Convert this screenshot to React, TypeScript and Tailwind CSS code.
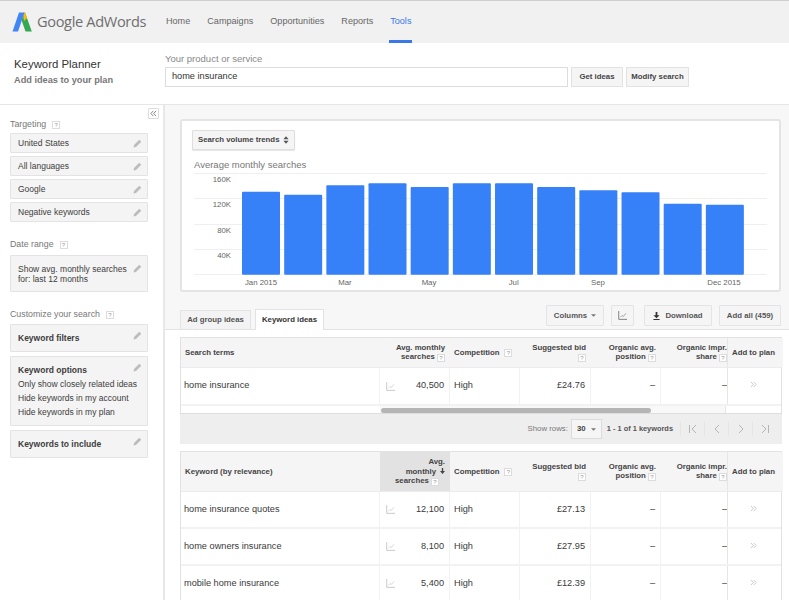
import type { ReactNode } from "react";

const columns = "grid grid-cols-[199px_70px_70px_71px_70px_66px_56px]";

const targeting = ["United States", "All languages", "Google", "Negative keywords"];
const navItems = ["Home", "Campaigns", "Opportunities", "Reports"];

const bars = [191.7, 194.7, 185.3, 183.3, 187, 183.3, 183.3, 187, 190.3, 192.3, 203.7, 204.7];
const gridLines = [173.5, 198.5, 224.5, 249.5, 274.5];
const yLabels = [
  { label: "160K", y: 182 },
  { label: "120K", y: 207 },
  { label: "80K", y: 232.5 },
  { label: "40K", y: 258 },
];
const xLabels = [
  { label: "Jan 2015", x: 261 },
  { label: "Mar", x: 345 },
  { label: "May", x: 429 },
  { label: "Jul", x: 513.7 },
  { label: "Sep", x: 598 },
  { label: "Dec 2015", x: 724 },
];

const keywords = [
  { term: "home insurance quotes", volume: "12,100", bid: "£27.13" },
  { term: "home owners insurance", volume: "8,100", bid: "£27.95" },
  { term: "mobile home insurance", volume: "5,400", bid: "£12.39" },
];

const Help = () => (
  <span className="inline-flex w-[8px] h-[8px] items-center justify-center border border-[#dcdcdc] bg-white text-[6px] leading-none font-normal text-[#999] align-[-1px]">
    ?
  </span>
);

const Pencil = () => (
  <svg viewBox="0 0 10 10" className="w-[9px] h-[9px] shrink-0">
    <path d="M7 .8 9.2 3 3.3 8.9.6 9.4 1.1 6.7Z" fill="#bcbcbc" />
  </svg>
);

const TrendIcon = ({ color = "#c4c4c4" }: { color?: string }) => (
  <svg viewBox="0 0 10 10" className="w-[9px] h-[9px] shrink-0" fill="none" stroke={color}>
    <path d="M.8 0V9.3H10" strokeWidth="1" />
    <path d="M2.5 7 4.5 5 6 6 9 2.5" strokeWidth=".7" />
  </svg>
);

const Chevrons = () => (
  <svg viewBox="0 0 8 8" className="w-[7px] h-[7px]" fill="none" stroke="#c9c9c9" strokeWidth="1.1">
    <path d="M1 1 3.8 4 1 7M4.2 1 7 4 4.2 7" />
  </svg>
);

const SideLabel = ({ children }: { children: ReactNode }) => (
  <div className="flex items-center gap-[6px] h-[10px] text-[8.8px] text-[#777]">
    {children}
    <Help />
  </div>
);

const SideBox = ({ className, children }: { className: string; children: ReactNode }) => (
  <div className={`flex justify-between pl-[7px] pr-[5px] bg-[#f4f4f4] border border-[#e3e3e3] rounded-[1px] text-[8.5px] text-[#3d3d3d] ${className}`}>
    {children}
  </div>
);

const ToolButton = ({ className, children }: { className: string; children: ReactNode }) => (
  <div className={`flex items-center justify-center h-[21px] bg-[#f5f5f5] border border-[#e4e4e4] rounded-[1px] text-[7.8px] font-bold text-[#555] ${className}`}>
    {children}
  </div>
);

const Head = ({ className = "", children }: { className?: string; children: ReactNode }) => (
  <div className={`flex flex-col justify-center text-right pr-[5px] text-[7.8px] leading-[9.5px] font-bold text-[#444] whitespace-nowrap ${className}`}>
    {children}
  </div>
);

const TableHead = ({ first, avg, height }: { first: string; avg: ReactNode; height: string }) => (
  <div className={`${columns} ${height} bg-[#f5f5f5] border-b border-[#ececec]`}>
    <div className="flex items-center pl-[4px] text-[7.8px] font-bold text-[#444]">{first}</div>
    {avg}
    <Head className="!flex-row !justify-start items-center gap-[5px] pl-[4px]">
      Competition <Help />
    </Head>
    <Head>
      <div>Suggested bid</div>
      <div>
        <Help />
      </div>
    </Head>
    <Head>
      <div>Organic avg.</div>
      <div>
        position <Help />
      </div>
    </Head>
    <Head className="!pr-0 overflow-hidden">
      <div>Organic impr.</div>
      <div>
        share <Help />
      </div>
    </Head>
    <div className="flex items-center justify-center pr-[4px] bg-[#f5f5f5] border-l border-[#e6e6e6] text-[7.8px] font-bold text-[#444] whitespace-nowrap">
      Add to plan
    </div>
  </div>
);

const Cells = ({ term, volume, bid, chevronPad }: { term: string; volume: string; bid: string; chevronPad: string }) => (
  <>
    <div className="flex items-center pl-[3px] border-r border-[#f2f2f2]">{term}</div>
    <div className="flex items-center justify-between pl-[6px] pr-[5px] border-r border-[#f2f2f2]">
      <TrendIcon />
      {volume}
    </div>
    <div className="flex items-center pl-[4px] border-r border-[#f2f2f2]">High</div>
    <div className="flex items-center justify-end pr-[5px] border-r border-[#f2f2f2]">{bid}</div>
    <div className="flex items-center justify-end pr-[5px] border-r border-[#f2f2f2]">–</div>
    <div className="flex items-center justify-end">–</div>
    <div className={`flex items-center justify-center pr-[4px] border-l border-[#e6e6e6] ${chevronPad}`}>
      <Chevrons />
    </div>
  </>
);

const Pager = ({ d }: { d: string }) => (
  <div className="flex items-center justify-center w-[24px] h-[16px] border-l border-[#e6e6e6]">
    <svg viewBox="0 0 10 10" className="w-[10px] h-[10px]" fill="none" stroke="#b5b5b5" strokeWidth="1">
      <path d={d} />
    </svg>
  </div>
);

const TrendChart = () => (
  <svg viewBox="194 170 575 118" className="w-[575px] h-[118px] block">
    {gridLines.map((y) => (
      <line key={y} x1="194" x2="767" y1={y} y2={y} stroke="#efefef" />
    ))}
    {bars.map((top, i) => (
      <rect key={i} x={242 + i * 42.17} y={top} width="38" height={274.7 - top} rx="1" fill="#3781f8" />
    ))}
    {yLabels.map((l) => (
      <text key={l.label} x="231" y={l.y} textAnchor="end" fontSize="7.8" fill="#666">
        {l.label}
      </text>
    ))}
    {xLabels.map((l) => (
      <text key={l.label} x={l.x} y="285" textAnchor="middle" fontSize="7.8" fill="#666">
        {l.label}
      </text>
    ))}
  </svg>
);

export default function App() {
  return (
    <div className="w-[789px] h-[600px] overflow-hidden bg-white font-['Liberation_Sans',Arial,sans-serif]">
      <header className="flex items-center h-[43px] pl-[12px] bg-[#f1f1f1] border-t border-[#cfcfcf]">
        <svg viewBox="0 0 20 20" className="w-[20px] h-[20px] shrink-0">
          <path d="M9.5 8 13 0.5 19.8 19.5H13.5Z" fill="#34a853" />
          <path d="M11 .5H13L15 6 12 9Z" fill="#fbbc05" />
          <path d="M7 0.5H12.5L6 19.5H0.5Z" fill="#4285f4" />
        </svg>
        <div className="ml-[5px] w-[129px] font-['Open_Sans',sans-serif] text-[14.6px] tracking-[-0.35px] text-[#6f6f6f] whitespace-nowrap">
          Google AdWords
        </div>
        <nav className="flex gap-[17px] h-full items-stretch text-[9.1px] text-[#666]">
          {navItems.map((item) => (
            <div key={item} className="flex items-center">
              {item}
            </div>
          ))}
          <div className="flex items-center -ml-[1px] px-[1px] border-b-[3px] border-[#3b78e7] pt-[3px] text-[#3b78e7]">Tools</div>
        </nav>
      </header>

      <section className="flex h-[62px] border-b border-[#e6e6e6]">
        <div className="w-[165px] pl-[14px] pt-[14px]">
          <div className="text-[11.4px] leading-[14px] text-[#333]">Keyword Planner</div>
          <div className="mt-[4px] text-[9.2px] leading-[10px] font-bold text-[#777]">Add ideas to your plan</div>
        </div>
        <div className="pt-[11px]">
          <div className="h-[13px] text-[9.5px] leading-[10px] text-[#888]">Your product or service</div>
          <div className="flex gap-[3px]">
            <div className="flex items-center w-[403px] h-[20px] pl-[6px] border border-[#dcdcdc] text-[9.2px] text-[#333]">
              home insurance
            </div>
            <div className="flex items-center justify-center w-[52px] h-[20px] bg-[#f5f5f5] border border-[#e2e2e2] text-[7.8px] font-bold text-[#444]">
              Get ideas
            </div>
            <div className="flex items-center justify-center w-[63px] h-[20px] bg-[#f5f5f5] border border-[#e2e2e2] text-[7.8px] font-bold text-[#444]">
              Modify search
            </div>
          </div>
        </div>
      </section>

      <div className="flex h-[495px]">
        <aside className="w-[165px] shrink-0 pt-[3px] pl-[10px] pr-[15px] border-r-2 border-[#e8e8e8]">
          <div className="flex justify-end -mr-[11px] h-[11px]">
            <div className="flex items-center justify-center w-[11px] h-[11px] border border-[#dcdcdc] rounded-[1px] bg-white">
              <svg viewBox="0 0 8 8" className="w-[7px] h-[7px]" fill="none" stroke="#777" strokeWidth="1">
                <path d="M3.8 1 1 4 3.8 7M7 1 4.2 4 7 7" />
              </svg>
            </div>
          </div>
          <div className="mt-[1px] mb-[3px]">
            <SideLabel>Targeting</SideLabel>
          </div>
          <div className="flex flex-col gap-[3px]">
            {targeting.map((item) => (
              <SideBox key={item} className="items-center h-[20px]">
                {item}
                <Pencil />
              </SideBox>
            ))}
          </div>
          <div className="mt-[18px] mb-[5px]">
            <SideLabel>Date range</SideLabel>
          </div>
          <SideBox className="h-[37px] pt-[8px] leading-[10px]">
            <div className="w-[110px] whitespace-nowrap">
              Show avg. monthly searches
              <br />
              for: last 12 months
            </div>
            <Pencil />
          </SideBox>
          <div className="mt-[18px] mb-[4px]">
            <SideLabel>Customize your search</SideLabel>
          </div>
          <div className="flex flex-col gap-[4px]">
            <SideBox className="h-[28px] pt-[6px] leading-[14px]">
              <div className="font-bold">Keyword filters</div>
              <Pencil />
            </SideBox>
            <SideBox className="h-[70px] pt-[6px] leading-[14px]">
              <div className="w-[110px] whitespace-nowrap">
                <div className="font-bold">Keyword options</div>
                <div>Only show closely related ideas</div>
                <div>Hide keywords in my account</div>
                <div>Hide keywords in my plan</div>
              </div>
              <Pencil />
            </SideBox>
            <SideBox className="h-[28px] pt-[6px] leading-[14px]">
              <div className="font-bold">Keywords to include</div>
              <Pencil />
            </SideBox>
          </div>
        </aside>

        <main className="flex-1 min-w-0">
          <div className="h-[225px] pt-[14px] pl-[15px] pr-[8px] bg-[#f7f7f7] border-b border-[#e2e2e2]">
            <div className="h-[173px] pt-[9px] pl-[10px] bg-white border-2 border-[#e4e4e4] rounded-[3px]">
              <div className="flex items-center justify-between w-[103px] h-[20px] px-[5px] bg-[#f5f5f5] border border-[#dedede] rounded-[1px] text-[7.8px] font-bold text-[#444] shadow-[0_1px_1px_#e5e5e5]">
                Search volume trends
                <svg viewBox="0 0 8 10" className="w-[6px] h-[8px]" fill="#555">
                  <path d="M4 0 7.5 4H.5ZM4 10 .5 6H7.5Z" />
                </svg>
              </div>
              <div className="mt-[10px] ml-[2px] h-[10px] text-[9.5px] leading-[10px] text-[#777]">
                Average monthly searches
              </div>
              <div className="ml-[2px]">
                <TrendChart />
              </div>
            </div>
            <div className="flex items-end justify-between mt-[13px] h-[24px]">
              <div className="flex gap-[4px] items-end">
                <div className="flex items-center justify-center w-[71px] h-[19px] bg-[#f3f3f3] border border-b-0 border-[#e4e4e4] text-[7.8px] font-bold text-[#555]">
                  Ad group ideas
                </div>
                <div className="flex items-center justify-center w-[69px] h-[21px] -mb-px bg-white border border-b-0 border-[#e2e2e2] text-[7.8px] font-bold text-[#333]">
                  Keyword ideas
                </div>
              </div>
              <div className="flex self-start">
                <ToolButton className="w-[58px] gap-[4px]">
                  Columns
                  <svg viewBox="0 0 6 3" className="w-[5px] h-[3px]" fill="#777">
                    <path d="M0 0H6L3 3Z" />
                  </svg>
                </ToolButton>
                <ToolButton className="w-[23px] ml-[7px]">
                  <TrendIcon color="#777" />
                </ToolButton>
                <ToolButton className="w-[68px] ml-[10px] gap-[5px]">
                  <svg viewBox="0 0 8 9" className="w-[7px] h-[8px]" fill="#333">
                    <path d="M3 0H5V3.5H7.5L4 7 .5 3.5H3ZM.5 8H7.5V9H.5Z" />
                  </svg>
                  Download
                </ToolButton>
                <ToolButton className="w-[62px] ml-[7px]">Add all (459)</ToolButton>
              </div>
            </div>
          </div>

          <div className="pt-[7px] pl-[15px] pr-[7px]">
            <div className="border-x border-t border-[#e2e2e2]">
              <TableHead
                first="Search terms"
                height="h-[30px]"
                avg={
                  <Head>
                    <div>Avg. monthly</div>
                    <div>
                      searches <Help />
                    </div>
                  </Head>
                }
              />
              <div className={`${columns} h-[36px] text-[9.2px] text-[#3a3a3a]`}>
                <Cells term="home insurance" volume="40,500" bid="£24.76" chevronPad="pb-[4px]" />
              </div>
              <div className="flex h-[9px] border-t-2 border-[#f2f2f2]">
                <div className="w-[199px] shrink-0" />
                <div className="flex-1 pt-[2px] pl-[1px] bg-[#f8f8f8]">
                  <div className="w-[270px] h-[5px] rounded-[3px] bg-[#b5b5b5]" />
                </div>
                <div className="w-[56px] shrink-0 border-l border-[#e6e6e6]" />
              </div>
            </div>
            <div className="flex items-center justify-end h-[31px] pr-[6px] bg-[#eeeeee] border-t border-[#dedede] text-[7.8px]">
              <span className="text-[#777]">Show rows:</span>
              <div className="flex items-center justify-center gap-[5px] w-[31px] h-[20px] ml-[3px] bg-[#f5f5f5] border border-[#dcdcdc] font-bold text-[#444]">
                30
                <svg viewBox="0 0 6 3" className="w-[5px] h-[3px]" fill="#777">
                  <path d="M0 0H6L3 3Z" />
                </svg>
              </div>
              <span className="ml-[5px] mr-[7px] text-[7.4px] font-bold text-[#555]">1 - 1 of 1 keywords</span>
              <Pager d="M1.5 1V9M8 1 4 5 8 9" />
              <Pager d="M7 1 3 5 7 9" />
              <Pager d="M3 1 7 5 3 9" />
              <Pager d="M2 1 6 5 2 9M8.5 1V9" />
            </div>

            <div className="mt-[7px] border-x border-t border-[#e2e2e2]">
              <TableHead
                first="Keyword (by relevance)"
                height="h-[40px]"
                avg={
                  <Head className="bg-[#e2e2e2]">
                    <div>Avg.</div>
                    <div className="flex items-center justify-end gap-[4px]">
                      monthly
                      <svg viewBox="0 0 6 7" className="w-[5px] h-[6px]" fill="#444">
                        <path d="M2.2 0H3.8V3.5H6L3 7 0 3.5H2.2Z" />
                      </svg>
                    </div>
                    <div className="pr-[6px]">
                      searches <Help />
                    </div>
                  </Head>
                }
              />
              {keywords.map((k) => (
                <div key={k.term} className={`${columns} h-[37px] border-b-2 border-[#f2f2f2] text-[9.2px] text-[#3a3a3a]`}>
                  <Cells {...k} chevronPad="pb-[2px]" />
                </div>
              ))}
            </div>
          </div>
        </main>
      </div>
    </div>
  );
}
